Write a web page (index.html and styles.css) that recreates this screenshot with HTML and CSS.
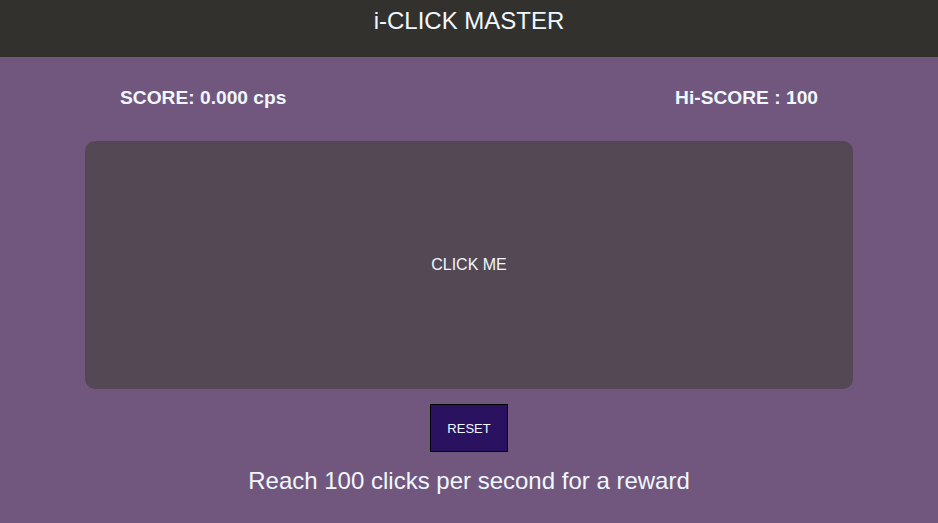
FILE: index.html
```html
<!DOCTYPE html>
<html>
<head>
<meta charset="utf-8">
<link rel="stylesheet" href="styles.css">
</head>
<body>
<header class="top">
  <h1 class="title">i-CLICK MASTER</h1>
</header>
<main class="game">
  <div class="scores">
    <span class="score">SCORE: 0.000 cps</span>
    <span class="score">Hi-SCORE : 100</span>
  </div>
  <button class="clicker">CLICK ME</button>
  <button class="reset">RESET</button>
  <p class="hint">Reach 100 clicks per second for a reward</p>
</main>
</body>
</html>
```
FILE: styles.css
```css
html, body {
  margin: 0;
  padding: 0;
  background: #71577d;
  font-family: "Liberation Sans", Arial, sans-serif;
  color: #f0f8ff;
}
.top {
  background: #33312d;
  height: 57px;
  box-sizing: border-box;
  padding-top: 7px;
}
.title {
  margin: 0;
  text-align: center;
  font-weight: normal;
  font-size: 24px;
  line-height: 28px;
}
.game {
  width: 768px;
  margin: 0 auto;
  display: flex;
  flex-direction: column;
  align-items: center;
}
.scores {
  align-self: stretch;
  display: flex;
  justify-content: space-between;
  padding: 30px 35px 0;
  height: 84px;
  box-sizing: border-box;
}
.score {
  font-weight: bold;
  font-size: 19.2px;
  line-height: 22px;
}
.clicker {
  align-self: stretch;
  height: 248px;
  border: none;
  border-radius: 10px;
  background: #544854;
  color: #f0f8ff;
  font-family: inherit;
  font-size: 16px;
  padding: 0;
}
.reset {
  margin-top: 15px;
  width: 78px;
  height: 48px;
  background: #2a1260;
  border: 1px solid #000;
  color: #f0f8ff;
  font-family: inherit;
  font-size: 13px;
  padding: 0;
}
.hint {
  margin: 15px 0 0;
  font-size: 24px;
  line-height: 28px;
}
```
